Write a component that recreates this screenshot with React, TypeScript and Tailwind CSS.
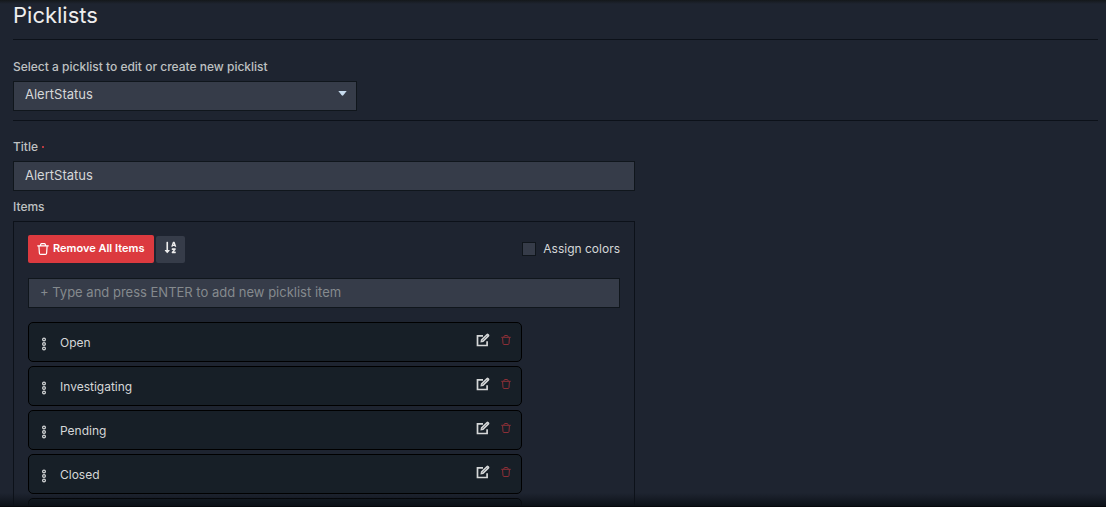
import React, { useState } from 'react';
import { FaSortAlphaDown } from 'react-icons/fa';

interface PicklistItem {
  id: number;
  name: string;
}

const initialItems: PicklistItem[] = [
  { id: 1, name: 'Open' },
  { id: 2, name: 'Investigating' },
  { id: 3, name: 'Pending' },
  { id: 4, name: 'Closed' },
  { id: 5, name: '' },
];

const fieldClass = 'block h-[30px] w-full border border-[#10161c] bg-[#363c49] px-[11px] pb-0.5 text-[13px] text-[#d5d7d8] outline-none';

function TrashIcon({ className }: { className?: string }) {
  return (
    <svg viewBox="0 0 12 12" className={className} fill="none" stroke="currentColor" strokeWidth="1.2" aria-hidden="true">
      <path d="M0.3 2.8h11.4M3.3 2.6l.5-1.4q.2-.6.8-.6h2.8q.6 0 .8.6l.5 1.4M1.9 3l.5 7.2q.1 1.2 1.2 1.2h4.8q1.1 0 1.2-1.2l.5-7.2" />
    </svg>
  );
}

function EditIcon() {
  return (
    <svg viewBox="0 0 14 14" className="h-3.5 w-3.5" aria-hidden="true">
      <path d="M7 2.8H1.5v9.7h9.6V8.2" fill="none" stroke="currentColor" strokeWidth="1.7" />
      <path d="M4.4 9.6l.5-3L10.6 1q.9-.9 1.8 0l.6.6q.9.9 0 1.8L7.4 9z" fill="currentColor" />
      <path d="M6.2 7.7l5-5" stroke="#171f27" strokeWidth=".5" />
    </svg>
  );
}

function DragHandle() {
  return (
    <svg viewBox="0 0 6 14" className="mt-1 h-3.5 w-1.5 shrink-0 cursor-move" fill="none" stroke="#d5d7d8" strokeWidth="1.2" aria-hidden="true">
      <circle cx="3" cy="2.5" r="1.4" />
      <circle cx="3" cy="7" r="1.4" />
      <circle cx="3" cy="11.5" r="1.4" />
    </svg>
  );
}

export default function App() {
  const [title, setTitle] = useState('AlertStatus');
  const [items, setItems] = useState(initialItems);
  const [draft, setDraft] = useState('');

  const addItem = (e: React.KeyboardEvent) => {
    if (e.key !== 'Enter' || !draft.trim()) return;
    setItems([{ id: Date.now(), name: draft.trim() }, ...items]);
    setDraft('');
  };

  const sortItems = () => setItems([...items].sort((a, b) => a.name.localeCompare(b.name)));

  return (
    <div className="relative h-screen overflow-hidden bg-[#1e2430] font-['Inter',sans-serif] text-xs text-[#d5d7d8]">
      <main className="pr-2 pl-[13px]">
        <h1 className="h-[39px] text-[22px] leading-[31px] text-[#eeeeee]">Picklists</h1>
        <hr className="border-[#0c1119]" />

        <section className="pt-[18px] pb-[9px]">
          <label htmlFor="picklist" className="block pb-[5px] text-xs leading-[18px] font-medium text-[#bfc1c2]">
            Select a picklist to edit or create new picklist
          </label>
          <div className="relative w-full max-w-[344px]">
            <select id="picklist" className={`${fieldClass} appearance-none`}>
              <option>AlertStatus</option>
            </select>
            <svg viewBox="0 0 10 6" className="pointer-events-none absolute top-[10px] right-[10px] h-[5px] w-[9px]" aria-hidden="true">
              <path d="M0 0h10L6 5.2q-1 .8-2 0z" fill="#c7dbee" />
            </svg>
          </div>
        </section>
        <hr className="border-[#0c1119]" />

        <section className="max-w-[622px] pt-[17px]">
          <label htmlFor="title" className="flex items-center gap-1 pb-[5px] text-xs leading-[18px] font-medium text-[#bfc1c2]">
            Title
            <span className="h-0.5 w-0.5 bg-[#b93a40]" />
          </label>
          <input id="title" required value={title} onChange={e => setTitle(e.target.value)} className={fieldClass} />

          <h2 className="pt-[7px] pb-[5px] text-xs leading-[18px] font-medium text-[#bfc1c2]">Items</h2>
          <div className="border border-[#0c1119] p-[14px] pt-[13px]">
            <div className="flex items-end gap-0.5">
              <button
                onClick={() => setItems([])}
                className="flex h-7 items-center gap-1 rounded-xs bg-[#dc3a3f] pr-2.5 pb-0.5 pl-[9px] text-[11px] font-semibold text-white"
              >
                <TrashIcon className="mt-0.5 h-3 w-3" />
                Remove All Items
              </button>
              <button
                aria-label="Sort items"
                onClick={sortItems}
                className="flex h-[27px] w-[29px] items-center justify-center rounded-xs bg-[#363c49] pb-1 text-[#eeeeee]"
              >
                <FaSortAlphaDown className="h-[13px] w-[13px]" />
              </button>
              <label className="ml-auto flex h-7 items-center gap-[7px]">
                <input type="checkbox" className="h-[14px] w-[14px] appearance-none border border-[#10161c] bg-[#363c49] checked:bg-[#7d8798]" />
                Assign colors
              </label>
            </div>

            <input
              aria-label="New picklist item"
              placeholder="+ Type and press ENTER to add new picklist item"
              value={draft}
              onChange={e => setDraft(e.target.value)}
              onKeyDown={addItem}
              className={`${fieldClass} mt-[15px] placeholder:text-[#858a8e]`}
            />

            <ul className="mt-[14px] flex w-full max-w-[494px] flex-col gap-1">
              {items.map(item => (
                <li key={item.id} className="flex h-10 items-center rounded-[5px] border border-black bg-[#171f27] pr-[10px] pl-3">
                  <DragHandle />
                  <span className="ml-[13px] pt-0.5">{item.name}</span>
                  <button aria-label="Edit item" className="mr-[11px] mb-1 ml-auto text-[#d5d7d8]">
                    <EditIcon />
                  </button>
                  <button
                    aria-label="Delete item"
                    onClick={() => setItems(items.filter(i => i.id !== item.id))}
                    className="mb-1 text-[#8c2f37]"
                  >
                    <TrashIcon className="h-2.5 w-2.5" />
                  </button>
                </li>
              ))}
            </ul>
          </div>
        </section>
      </main>

      {/* scroll shadows */}
      <div className="pointer-events-none absolute inset-x-0 top-0 h-1 bg-linear-to-b from-[#14181b] to-transparent" />
      <div className="pointer-events-none absolute inset-x-0 bottom-0 h-3.5 border-b border-[#06080c] bg-linear-to-t from-[#0c1118] to-transparent" />
    </div>
  );
}
